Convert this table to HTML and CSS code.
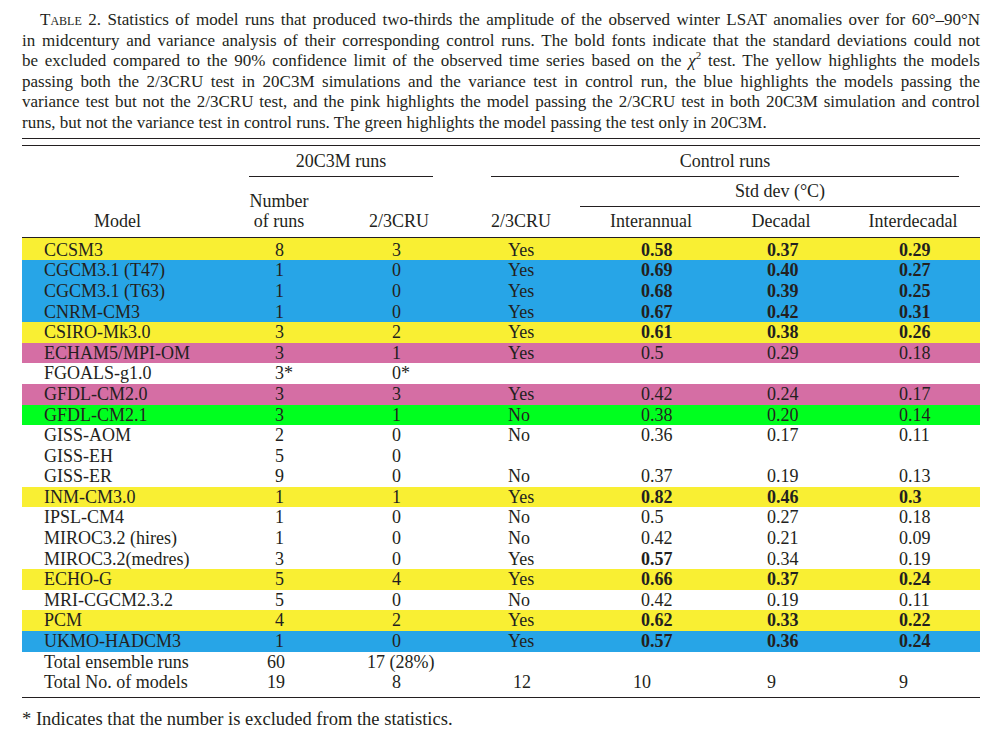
FILE: index.html
```html
<!DOCTYPE html>
<html>
<head>
<meta charset="utf-8">
<title>Table 2</title>
<link rel="stylesheet" href="styles.css">
</head>
<body>
<div class="page">
  <p class="caption">
    <span class="ln first"><span class="sc">Table</span> 2. Statistics of model runs that produced two-thirds the amplitude of the observed winter LSAT anomalies over for 60°–90°N</span>
    <span class="ln">in midcentury and variance analysis of their corresponding control runs. The bold fonts indicate that the standard deviations could not</span>
    <span class="ln">be excluded compared to the 90% confidence limit of the observed time series based on the <i>χ</i><sup>2</sup> test. The yellow highlights the models</span>
    <span class="ln">passing both the 2/3CRU test in 20C3M simulations and the variance test in control run, the blue highlights the models passing the</span>
    <span class="ln">variance test but not the 2/3CRU test, and the pink highlights the model passing the 2/3CRU test in both 20C3M simulation and control</span>
    <span class="ln last">runs, but not the variance test in control runs. The green highlights the model passing the test only in 20C3M.</span>
  </p>

  <div class="tbl">
    <table>
      <colgroup>
        <col class="w1"><col class="w2"><col class="w3"><col class="w4"><col class="w5"><col class="w6"><col class="w7">
      </colgroup>
      <thead>
        <tr class="ha">
          <th rowspan="3" class="bot model-h">Model</th>
          <th colspan="2"><div class="span-h s20">20C3M runs</div></th>
          <th colspan="4"><div class="span-h sctrl">Control runs</div></th>
        </tr>
        <tr class="hb">
          <th rowspan="2" class="bot">Number<br>of runs</th>
          <th rowspan="2" class="bot">2/3CRU</th>
          <th rowspan="2" class="bot">2/3CRU</th>
          <th colspan="3"><div class="span-h sstd">Std dev (°C)</div></th>
        </tr>
        <tr class="hc">
          <th class="bot">Interannual</th>
          <th class="bot">Decadal</th>
          <th class="bot inter-h">Interdecadal</th>
        </tr>
      </thead>
      <tbody>
        <tr class="y firstrow"><td class="m">CCSM3</td><td class="n">8</td><td class="c">3</td><td class="yn">Yes</td><td class="i"><b>0.58</b></td><td class="d"><b>0.37</b></td><td class="e"><b>0.29</b></td></tr>
        <tr class="b"><td class="m">CGCM3.1 (T47)</td><td class="n">1</td><td class="c">0</td><td class="yn">Yes</td><td class="i"><b>0.69</b></td><td class="d"><b>0.40</b></td><td class="e"><b>0.27</b></td></tr>
        <tr class="b"><td class="m">CGCM3.1 (T63)</td><td class="n">1</td><td class="c">0</td><td class="yn">Yes</td><td class="i"><b>0.68</b></td><td class="d"><b>0.39</b></td><td class="e"><b>0.25</b></td></tr>
        <tr class="b"><td class="m">CNRM-CM3</td><td class="n">1</td><td class="c">0</td><td class="yn">Yes</td><td class="i"><b>0.67</b></td><td class="d"><b>0.42</b></td><td class="e"><b>0.31</b></td></tr>
        <tr class="y"><td class="m">CSIRO-Mk3.0</td><td class="n">3</td><td class="c">2</td><td class="yn">Yes</td><td class="i"><b>0.61</b></td><td class="d"><b>0.38</b></td><td class="e"><b>0.26</b></td></tr>
        <tr class="p"><td class="m">ECHAM5/MPI-OM</td><td class="n">3</td><td class="c">1</td><td class="yn">Yes</td><td class="i">0.5</td><td class="d">0.29</td><td class="e">0.18</td></tr>
        <tr><td class="m">FGOALS-g1.0</td><td class="n">3*</td><td class="c">0*</td><td class="yn"></td><td class="i"></td><td class="d"></td><td class="e"></td></tr>
        <tr class="p"><td class="m">GFDL-CM2.0</td><td class="n">3</td><td class="c">3</td><td class="yn">Yes</td><td class="i">0.42</td><td class="d">0.24</td><td class="e">0.17</td></tr>
        <tr class="g"><td class="m">GFDL-CM2.1</td><td class="n">3</td><td class="c">1</td><td class="yn">No</td><td class="i">0.38</td><td class="d">0.20</td><td class="e">0.14</td></tr>
        <tr><td class="m">GISS-AOM</td><td class="n">2</td><td class="c">0</td><td class="yn">No</td><td class="i">0.36</td><td class="d">0.17</td><td class="e">0.11</td></tr>
        <tr><td class="m">GISS-EH</td><td class="n">5</td><td class="c">0</td><td class="yn"></td><td class="i"></td><td class="d"></td><td class="e"></td></tr>
        <tr><td class="m">GISS-ER</td><td class="n">9</td><td class="c">0</td><td class="yn">No</td><td class="i">0.37</td><td class="d">0.19</td><td class="e">0.13</td></tr>
        <tr class="y"><td class="m">INM-CM3.0</td><td class="n">1</td><td class="c">1</td><td class="yn">Yes</td><td class="i"><b>0.82</b></td><td class="d"><b>0.46</b></td><td class="e"><b>0.3</b></td></tr>
        <tr><td class="m">IPSL-CM4</td><td class="n">1</td><td class="c">0</td><td class="yn">No</td><td class="i">0.5</td><td class="d">0.27</td><td class="e">0.18</td></tr>
        <tr><td class="m">MIROC3.2 (hires)</td><td class="n">1</td><td class="c">0</td><td class="yn">No</td><td class="i">0.42</td><td class="d">0.21</td><td class="e">0.09</td></tr>
        <tr><td class="m">MIROC3.2(medres)</td><td class="n">3</td><td class="c">0</td><td class="yn">Yes</td><td class="i"><b>0.57</b></td><td class="d">0.34</td><td class="e">0.19</td></tr>
        <tr class="y"><td class="m">ECHO-G</td><td class="n">5</td><td class="c">4</td><td class="yn">Yes</td><td class="i"><b>0.66</b></td><td class="d"><b>0.37</b></td><td class="e"><b>0.24</b></td></tr>
        <tr><td class="m">MRI-CGCM2.3.2</td><td class="n">5</td><td class="c">0</td><td class="yn">No</td><td class="i">0.42</td><td class="d">0.19</td><td class="e">0.11</td></tr>
        <tr class="y"><td class="m">PCM</td><td class="n">4</td><td class="c">2</td><td class="yn">Yes</td><td class="i"><b>0.62</b></td><td class="d"><b>0.33</b></td><td class="e"><b>0.22</b></td></tr>
        <tr class="b"><td class="m">UKMO-HADCM3</td><td class="n">1</td><td class="c">0</td><td class="yn">Yes</td><td class="i"><b>0.57</b></td><td class="d"><b>0.36</b></td><td class="e"><b>0.24</b></td></tr>
        <tr class="tot"><td class="m">Total ensemble runs</td><td class="n n2">60</td><td class="c c2">17 (28%)</td><td class="yn"></td><td class="i"></td><td class="d"></td><td class="e"></td></tr>
        <tr class="tot lastrow"><td class="m">Total No. of models</td><td class="n n2">19</td><td class="c">8</td><td class="yn yn2">12</td><td class="i i2">10</td><td class="d">9</td><td class="e">9</td></tr>
      </tbody>
    </table>
  </div>

  <p class="foot">* Indicates that the number is excluded from the statistics.</p>
</div>
</body>
</html>
```

FILE: styles.css
```css
* { box-sizing: border-box; }

html, body {
  margin: 0;
  padding: 0;
  background: #ffffff;
}

body {
  font-family: "Liberation Serif", "Times New Roman", serif;
  color: #231f20;
  width: 1003px;
}

.page {
  padding: 10px 23px 0 22px;
}

/* ---------- caption ---------- */
.caption {
  margin: 0;
  width: 958px;
  font-size: 17px;
  line-height: 20.6px;
  text-align: justify;
}

.ln {
  display: block;
  text-align-last: justify;
}

.ln.first { text-indent: 18px; }
.ln.last { text-align-last: left; }

.sc { font-variant: small-caps; }

.caption sup {
  font-size: 11px;
  line-height: 0;
  vertical-align: 7px;
}

/* ---------- table ---------- */
.tbl {
  margin-top: 4.4px;
  width: 958px;
  border-top: 1px solid #231f20;
  padding-top: 6px;
}

table {
  width: 958px;
  table-layout: fixed;
  border-collapse: separate;
  border-spacing: 0;
  border-top: 1px solid #231f20;
  border-bottom: 1px solid #231f20;
  font-size: 18px;
}

col.w1 { width: 218px; }
col.w2 { width: 78px; }
col.w3 { width: 162px; }
col.w4 { width: 82px; }
col.w5 { width: 178px; }
col.w6 { width: 82px; }
col.w7 { width: 158px; }

th {
  font-weight: normal;
  padding: 0;
  line-height: 20.6px;
  vertical-align: bottom;
  text-align: center;
  white-space: nowrap;
}

tr.ha { height: 31px; }
tr.hb { height: 30px; }
tr.hc { height: 31px; }

th.bot {
  border-bottom: 1px solid #231f20;
  padding-bottom: 5px;
}

th.model-h {
  text-align: left;
  padding-left: 72px;
}

th.inter-h { padding-left: 24px; }

.span-h {
  border-bottom: 1px solid #231f20;
  padding-bottom: 4px;
}

.s20 { margin: 0 47px 0 9px; }
.sctrl { margin: 0 21px 0 11px; }
.sstd { margin: 0 0 0 18px; }

td {
  padding: 0;
  line-height: 20.6px;
  white-space: nowrap;
  text-align: left;
  vertical-align: top;
}

td b { font-weight: bold; }

tr.firstrow td { padding-top: 1.8px; }
tr.lastrow td { padding-bottom: 4px; }

td.m { padding-left: 22px; }
td.n { padding-left: 35px; }
td.n2 { padding-left: 27px; }
td.c { padding-left: 74px; }
td.c2 { padding-left: 49px; }
td.yn { padding-left: 28px; }
td.yn2 { padding-left: 33px; }
td.i { padding-left: 79px; }
td.i2 { padding-left: 71px; }
td.d { padding-left: 27px; }
td.e { padding-left: 77px; }

tr.y td { background: #f9ef33; }
tr.b td { background: #27a5e7; }
tr.p td { background: #d56ea4; }
tr.g td { background: #00ff1f; }

/* ---------- footnote ---------- */
.foot {
  margin: 11px 0 0 0;
  font-size: 18.5px;
  line-height: 20.6px;
}
```
